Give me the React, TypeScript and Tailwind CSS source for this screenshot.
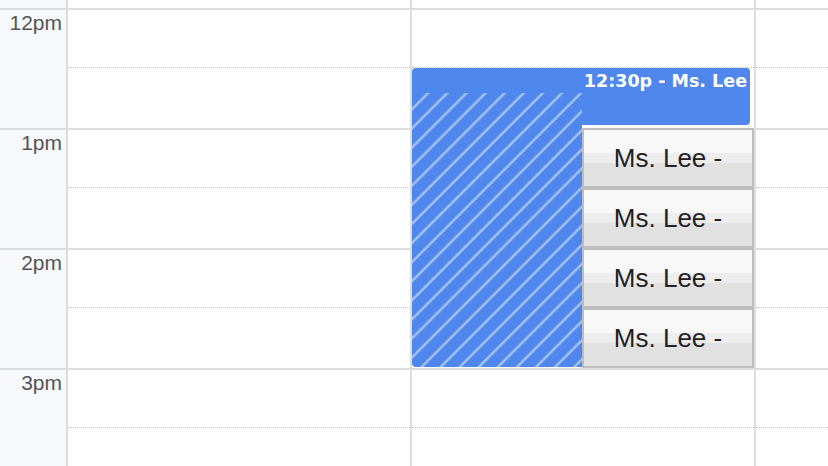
import React from 'react';

const hours = ['12pm', '1pm', '2pm', '3pm'];

const DayCell: React.FC<{ last?: boolean }> = ({ last }) => (
  <div className={last ? 'flex-1' : 'w-[344px] border-r-2 border-[#dddddd]'}>
    <div className="h-[58px] border-b border-dotted border-[#c4c4c4]" />
  </div>
);

const HourRow: React.FC<{ label: string }> = ({ label }) => (
  <div className="flex h-[120px] shrink-0 border-t-2 border-[#dddddd]">
    <div className="w-[68px] border-r-2 border-[#dddddd] bg-[#f7f8fb] pr-[4px] pt-[2px] text-right text-[21px] leading-none text-[#555555]">
      {label}
    </div>
    <DayCell />
    <DayCell />
    <DayCell last />
  </div>
);

const App: React.FC = () => {
  return (
    <div className="relative h-[466px] w-[828px] overflow-hidden bg-white font-['Liberation_Sans',Arial,sans-serif]">
      <div className="flex h-full flex-col">
        <div className="flex h-[8px] shrink-0">
          <div className="w-[68px] border-r-2 border-[#dddddd] bg-[#f7f8fb]" />
          <div className="w-[344px] border-r-2 border-[#dddddd]" />
          <div className="w-[344px] border-r-2 border-[#dddddd]" />
          <div className="flex-1" />
        </div>
        {hours.map((h) => (
          <HourRow key={h} label={h} />
        ))}
      </div>

      {/* event block */}
      <div className="absolute left-[412px] top-[68px] h-[57px] w-[338px] rounded-[4px] bg-[#4f87ec] pr-[3px] pt-[5px] text-right font-['DejaVu_Sans',Verdana,sans-serif] text-[17.5px] font-bold leading-none text-white">
        12:30p - Ms. Lee
      </div>
      <div className="absolute left-[412px] top-[93px] h-[274px] w-[170px] rounded-bl-[4px] bg-[repeating-linear-gradient(135deg,#4f87ec_0px,#4f87ec_9.5px,#86adf2_10.5px,#b3ccf7_11.5px,#86adf2_12.5px,#4f87ec_13.5px)]" />

      {/* overlapping event list */}
      <div className="absolute left-[582px] top-[128px] flex w-[172px] flex-col">
        {[0, 1, 2, 3].map((i) => (
          <div
            key={i}
            className="flex h-[60px] items-center justify-center border-2 border-[#bdbdbd] bg-[linear-gradient(to_bottom,#f8f8f8_0%,#f8f8f8_41%,#ededed_41%,#ededed_59%,#e1e1e1_59%,#e1e1e1_100%)] text-[26px] text-[#222222]"
          >
            Ms. Lee -
          </div>
        ))}
      </div>
    </div>
  );
};

export default App;
